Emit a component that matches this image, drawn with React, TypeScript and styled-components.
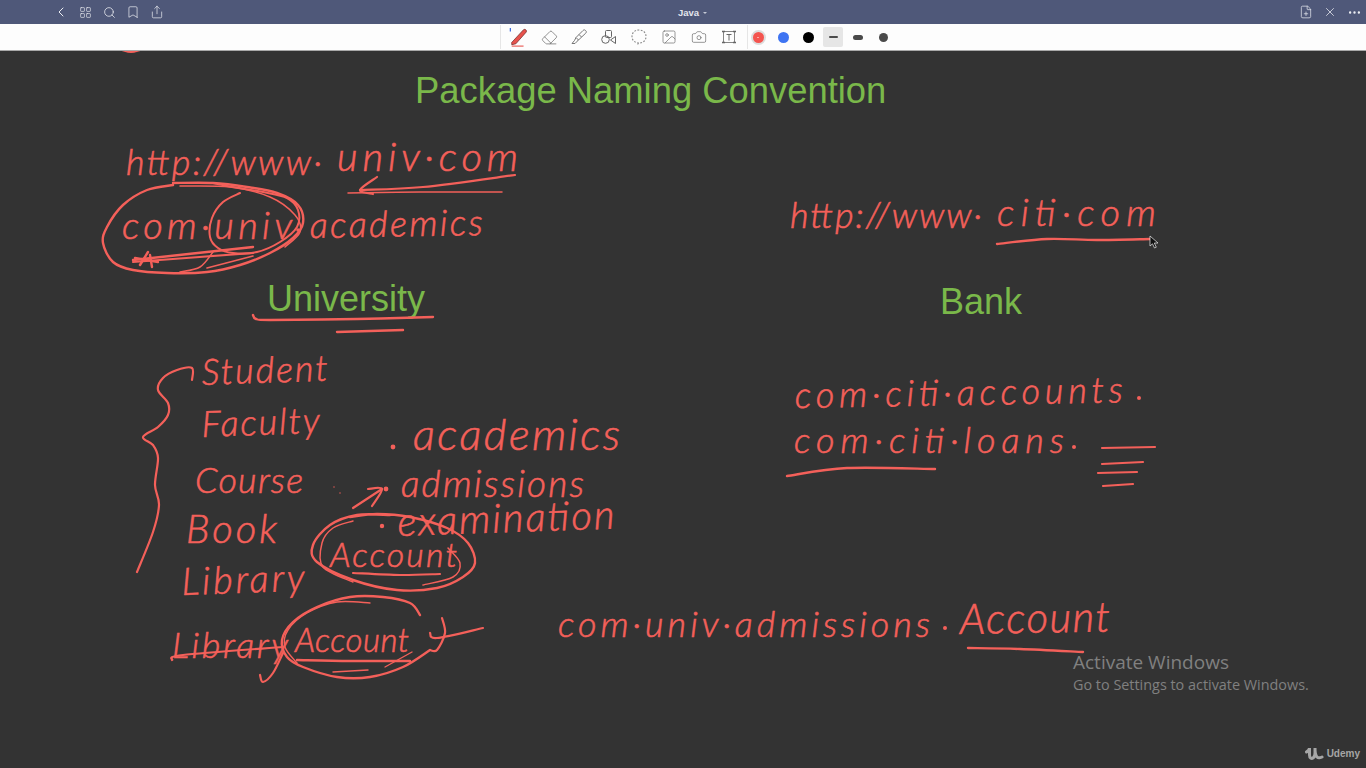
import React from 'react';
import styled, { createGlobalStyle } from 'styled-components';
import {
  Bookmark,
  Camera,
  ChevronLeft,
  Eraser,
  FilePlus,
  Image,
  LayoutGrid,
  MoreHorizontal,
  Search,
  Share,
  X,
} from 'lucide-react';

const INK = '#f4605a';
const CANVAS_TOP = 51;

const GlobalStyle = createGlobalStyle`
  html, body {
    margin: 0;
    padding: 0;
    height: 100%;
    overflow: hidden;
    background: #333333;
  }
`;

const Page = styled.div`
  display: flex;
  flex-direction: column;
  width: 1366px;
  height: 768px;
  font-family: 'Liberation Sans', Arial, sans-serif;
`;

// Top title bar
const TitleBar = styled.header`
  display: grid;
  grid-template-columns: 1fr auto 1fr;
  align-items: center;
  height: 24px;
  padding: 0 4px 0 53px;
  background: #4f5879;
  color: #eceef3;
`;

const IconRow = styled.div<{ $end?: boolean }>`
  display: flex;
  align-items: center;
  gap: 8px;
  justify-content: ${(p) => (p.$end ? 'flex-end' : 'flex-start')};
`;

const BarButton = styled.span`
  display: flex;
  align-items: center;
  justify-content: center;
  width: 16px;
  height: 16px;
`;

const DocTitle = styled.div`
  display: flex;
  align-items: center;
  gap: 4px;
  margin-right: 30px;
  font-size: 9.500px;
  font-weight: 700;
  color: #e4e6ee;
`;

const Caret = styled.span`
  margin-top: 1px;
  width: 0;
  height: 0;
  border-left: 2px solid transparent;
  border-right: 2px solid transparent;
  border-top: 2px solid #c5c9d6;
`;

// Drawing tools
const ToolBar = styled.nav`
  display: flex;
  align-items: center;
  height: 26px;
  padding-left: 500px;
  background: #fdfdfd;
  border-bottom: 1px solid #a9a9a9;
  color: #666666;
`;

const ToolGroup = styled.div`
  display: flex;
  align-items: center;
  gap: 10px;
  padding: 0 8px;
  border-left: 1px solid #e6e6e6;
  height: 24px;
`;

const Tool = styled.span`
  display: flex;
  align-items: center;
  justify-content: center;
  width: 20px;
  height: 20px;
`;

const SwatchGroup = styled.div`
  display: flex;
  align-items: center;
  gap: 5px;
  height: 24px;
  border-left: 1px solid #e6e6e6;
`;

const SwatchSlot = styled.span<{ $active?: boolean }>`
  display: flex;
  align-items: center;
  justify-content: center;
  width: 20px;
  height: 20px;
  border-radius: 2px;
  background: ${(p) => (p.$active ? '#e6e6e6' : 'transparent')};
`;

const Swatch = styled.span<{ $color: string; $ring?: boolean }>`
  display: flex;
  align-items: center;
  justify-content: center;
  width: 11px;
  height: 11px;
  border-radius: 50%;
  background: ${(p) => p.$color};
  box-shadow: ${(p) => (p.$ring ? '0 0 0 2px #dddddd' : 'none')};
`;

const SwatchMark = styled.span`
  width: 0;
  height: 0;
  border-left: 1.5px solid transparent;
  border-right: 1.5px solid transparent;
  border-top: 1.5px solid #ffffff;
`;

const Nib = styled.span<{ $w: number; $h: number }>`
  width: ${(p) => p.$w}px;
  height: ${(p) => p.$h}px;
  border-radius: ${(p) => p.$h}px;
  background: #4a4a4a;
`;

// Slide area
const Canvas = styled.main`
  position: relative;
  flex: 1;
  background: #333333;
  overflow: hidden;
`;

const Heading = styled.h2<{ $x: number; $y: number; $size?: number }>`
  position: absolute;
  left: ${(p) => p.$x}px;
  top: ${(p) => p.$y - CANVAS_TOP}px;
  margin: 0;
  font-size: ${(p) => p.$size ?? 36}px;
  line-height: 40px;
  font-weight: 400;
  white-space: nowrap;
  color: #7ab84a;
`;

const InkLayer = styled.svg`
  position: absolute;
  inset: 0;
  width: 1366px;
  height: 717px;
`;

const InkWord = styled.text<{ $size: number }>`
  font-family: Lato, 'Open Sans', sans-serif;
  font-style: italic;
  font-weight: 300;
  font-size: ${(p) => p.$size}px;
  fill: ${INK};
  stroke: ${INK};
  stroke-width: 0.6px;
`;

const InkLine = styled.path<{ $w?: number }>`
  fill: none;
  stroke: ${INK};
  stroke-width: ${(p) => p.$w ?? 2.2}px;
  stroke-linecap: round;
  stroke-linejoin: round;
`;

const InkDot = styled.circle`
  fill: ${INK};
`;

const Watermark = styled.aside`
  position: absolute;
  left: 1073px;
  top: ${650 - CANVAS_TOP}px;
  font-family: 'Open Sans', sans-serif;
  color: #808080;
`;

const WatermarkTitle = styled.div`
  font-size: 19px;
  line-height: 24px;
`;

const WatermarkText = styled.div`
  font-size: 14.400px;
  line-height: 22px;
`;

const Brand = styled.div`
  position: absolute;
  right: 6px;
  bottom: 7px;
  display: flex;
  align-items: center;
  gap: 3px;
  font-size: 10px;
  font-weight: 700;
  color: #a6a6a6;
`;

const Cursor = styled.svg`
  position: absolute;
  left: 1149px;
  top: ${235 - CANVAS_TOP}px;
`;

type Word = { t: string; x: number; y: number; w: number; s: number; r?: number };

// x, baseline y and width in page pixels
const words: Word[] = [
  { t: 'http://www·', x: 126, y: 175, w: 196, s: 36 },
  { t: 'univ·com', x: 337, y: 171, w: 181, s: 40 },
  { t: 'com·univ', x: 122, y: 239, w: 170, s: 38 },
  { t: 'academics', x: 310, y: 238, w: 173, s: 36, r: -1 },
  { t: 'Student', x: 202, y: 385, w: 126, s: 36, r: -2 },
  { t: 'Faculty', x: 202, y: 437, w: 118, s: 36, r: -2 },
  { t: 'Course', x: 195, y: 493, w: 108, s: 36 },
  { t: 'Book', x: 186, y: 543, w: 91, s: 40 },
  { t: 'Library', x: 182, y: 595, w: 123, s: 38, r: -2 },
  { t: 'Library', x: 172, y: 658, w: 116, s: 36 },
  { t: 'Account', x: 295, y: 652, w: 114, s: 33 },
  { t: 'Account', x: 330, y: 567, w: 127, s: 34 },
  { t: 'academics', x: 413, y: 450, w: 207, s: 44 },
  { t: 'admissions', x: 401, y: 497, w: 183, s: 37 },
  { t: 'examination', x: 398, y: 536, w: 217, s: 40, r: -2 },
  { t: 'http://www·', x: 790, y: 228, w: 192, s: 36 },
  { t: 'citi·com', x: 997, y: 226, w: 159, s: 38 },
  { t: 'com·citi·accounts', x: 795, y: 408, w: 328, s: 36, r: -1 },
  { t: 'com·citi·loans', x: 794, y: 453, w: 270, s: 36 },
  { t: 'com·univ·admissions', x: 558, y: 637, w: 372, s: 36 },
  { t: 'Account', x: 960, y: 634, w: 150, s: 42, r: -1 },
];

const dots: [number, number, number][] = [
  [298, 230, 1.8],
  [393, 447, 2.4],
  [386, 489, 2.4],
  [382, 526, 2.2],
  [334, 487, 0.7],
  [340, 493, 0.7],
  [1139, 398, 2],
  [1074, 447, 2],
  [945, 628, 2],
];

const strokes: { p: number[]; w?: number }[] = [
  // red edge cut off by the toolbar
  { p: [122, 50, 131, 52, 140, 50], w: 2 },
  // arrows under the url
  { p: [348, 193, 420, 192, 502, 192], w: 1.5 },
  { p: [360, 190, 423, 187, 515, 175] },
  { p: [377, 177, 360, 190, 373, 194] },
  // outer ring round com.univ
  { p: [173, 185, 147, 190, 123, 205, 107, 227, 103, 243, 113, 262, 133, 270, 167, 273, 207, 272, 240, 265, 270, 253, 293, 238, 303, 223, 298, 205, 277, 193, 247, 187, 213, 183, 173, 183], w: 2.4 },
  { p: [180, 186, 230, 187, 270, 197, 295, 215, 300, 232, 285, 247], w: 1.5 },
  { p: [240, 193, 223, 202, 212, 218, 210, 237, 218, 248, 233, 253, 257, 252, 280, 242, 297, 227, 298, 210, 287, 198, 263, 192, 233, 187, 213, 183], w: 2 },
  { p: [133, 260, 253, 247], w: 2.4 },
  { p: [133, 262, 253, 253] },
  { p: [213, 252, 200, 267, 180, 272], w: 1.6 },
  { p: [207, 268, 253, 256], w: 1.6 },
  { p: [148, 252, 140, 265], w: 2.4 },
  { p: [150, 255, 152, 267], w: 2.4 },
  { p: [135, 258, 158, 262], w: 2.4 },
  // University underlines
  { p: [253, 315, 256, 319, 270, 320, 357, 319, 433, 317], w: 2.4 },
  { p: [337, 332, 403, 330], w: 2.4 },
  // brace
  { p: [192, 380, 192, 368, 177, 370, 163, 378, 158, 390, 168, 403, 168, 415, 158, 427, 143, 437, 153, 445, 158, 458, 155, 485, 159, 505, 153, 532, 137, 572] },
  // admissions arrow
  { p: [353, 508, 382, 489] },
  { p: [368, 489, 382, 489, 372, 506] },
  // upper Account ring
  { p: [390, 515, 357, 515, 330, 525, 313, 545, 317, 562, 353, 580, 397, 590, 437, 588, 463, 577, 475, 563, 468, 543, 447, 528, 410, 517, 377, 514, 350, 517], w: 2.4 },
  { p: [353, 521, 333, 528, 322, 543, 323, 567, 353, 582], w: 1.5 },
  { p: [448, 548, 460, 563, 453, 577, 423, 585], w: 1.5 },
  { p: [353, 573, 400, 575, 440, 574] },
  // lower Account ring
  { p: [420, 615, 410, 603, 383, 597, 350, 597, 317, 607, 293, 622, 282, 640, 287, 657, 303, 667, 337, 677, 370, 677, 403, 667, 430, 650], w: 2.4 },
  { p: [370, 603, 337, 602, 307, 613, 288, 630, 285, 647, 297, 663], w: 1.4 },
  { p: [297, 660, 350, 661, 410, 661], w: 2.4 },
  { p: [385, 667, 412, 652], w: 1.4 },
  { p: [333, 672, 368, 670], w: 1.4 },
  { p: [260, 675, 263, 682, 273, 673, 283, 653], w: 2.2 },
  { p: [172, 660, 183, 655, 283, 647] },
  { p: [430, 633, 437, 638, 483, 628], w: 2.2 },
  { p: [442, 618, 445, 633, 437, 650, 430, 650], w: 2.2 },
  // bank notes
  { p: [997, 244, 1047, 239, 1097, 240, 1150, 239], w: 2.4 },
  { p: [787, 476, 847, 468, 935, 469], w: 2.4 },
  { p: [1102, 448, 1155, 447] },
  { p: [1102, 464, 1143, 462] },
  { p: [1098, 473, 1137, 472] },
  { p: [1103, 486, 1133, 484] },
  { p: [968, 648, 1020, 649, 1083, 652], w: 2.4 },
];

// smooth curve through a flat list of points
const smooth = (p: number[]) => {
  let d = `M${p[0]} ${p[1]}`;
  const n = p.length / 2;
  const at = (i: number, k: number) => p[Math.max(0, Math.min(n - 1, i)) * 2 + k];
  for (let i = 0; i < n - 1; i++) {
    const c1x = at(i, 0) + (at(i + 1, 0) - at(i - 1, 0)) / 6;
    const c1y = at(i, 1) + (at(i + 1, 1) - at(i - 1, 1)) / 6;
    const c2x = at(i + 1, 0) - (at(i + 2, 0) - at(i, 0)) / 6;
    const c2y = at(i + 1, 1) - (at(i + 2, 1) - at(i, 1)) / 6;
    d += ` C${c1x} ${c1y} ${c2x} ${c2y} ${at(i + 1, 0)} ${at(i + 1, 1)}`;
  }
  return d;
};

const PenIcon = () => (
  <svg width="22" height="22" viewBox="0 0 22 22" fill="none">
    <path d="M1.500 1v4" stroke="#3f6fe0" strokeWidth="1.400" />
    <path d="M3 17L16 3c1.500-1.200 4 .5 3 2.500L7.500 18.500 3 19.500z" fill="#e8524c" stroke="#6e2a28" strokeWidth="0.8" />
    <path d="M3 21h13" stroke="#e8524c" strokeWidth="1.200" />
  </svg>
);

const MarkerIcon = () => (
  <svg width="18" height="18" viewBox="0 0 18 18" fill="none" stroke="#777" strokeWidth="1">
    <path d="M6 9.500L13 2.500c.8-.8 1.700-.8 2.300-.2l.6.600c.6.6.6 1.500-.2 2.300L8.500 12z" />
    <path d="M6 9.500l-1.500 3-2.500 3h3l2.500-2.500 1-1.500M9 6.500l2.500 2.500" />
  </svg>
);

const ShapesIcon = () => (
  <svg width="18" height="18" viewBox="0 0 18 18" fill="none" stroke="#666" strokeWidth="1">
    <rect x="5.500" y="2.500" width="6" height="7" rx="1" />
    <circle cx="5.500" cy="11.500" r="3.800" />
    <path d="M15.500 8.500v7l-5-3.500z" />
  </svg>
);

const LassoIcon = () => (
  <svg width="18" height="18" viewBox="0 0 18 18" fill="none" stroke="#8a8a8a" strokeWidth="1.100" strokeDasharray="1.800 1.500">
    <path d="M9 15c-4 0-7-2.500-7-6.500S5 2 9 2s7 2.500 7 6.500-3 6.500-7 6.500c-1 0-1.500 1-.5 2" />
  </svg>
);

const TextBoxIcon = () => (
  <svg width="16" height="16" viewBox="0 0 16 16" fill="none" stroke="#666" strokeWidth="1">
    <path d="M2.500 2.500h11M2.500 13.500h11M2.500 2.500v11M13.500 2.500v11" strokeWidth="0.8" />
    <path d="M5.500 5.500h5M8 5.500v6" />
    <path d="M1 2.500h3M12 2.500h3M1 13.500h3M12 13.500h3" strokeWidth="1.400" />
  </svg>
);

const UdemyIcon = () => (
  <svg width="19" height="15" viewBox="0 0 19 15" fill="none" stroke="#a6a6a6" strokeWidth="3" strokeLinecap="round">
    <path d="M1.500 6c2-1.500 3-3 3-4v7c0 3 2 4 3.500 3s2-3 2-5V2c0 4 0 7 2 9 1 1 3 1 5 0" />
  </svg>
);

const App: React.FC = () => {
  const tools = [
    <PenIcon key="pen" />,
    <Eraser key="eraser" size={17} strokeWidth={1} />,
    <MarkerIcon key="marker" />,
    <ShapesIcon key="shapes" />,
    <LassoIcon key="lasso" />,
    <Image key="image" size={16} strokeWidth={1} />,
    <Camera key="camera" size={16} strokeWidth={1} />,
    <TextBoxIcon key="text" />,
  ];

  return (
    <Page>
      <GlobalStyle />
      <TitleBar>
        <IconRow>
          <BarButton><ChevronLeft size={16} strokeWidth={1.5} /></BarButton>
          <BarButton><LayoutGrid size={13} strokeWidth={1.2} /></BarButton>
          <BarButton><Search size={13} strokeWidth={1.4} /></BarButton>
          <BarButton><Bookmark size={14} strokeWidth={1.2} /></BarButton>
          <BarButton><Share size={14} strokeWidth={1.2} /></BarButton>
        </IconRow>
        <DocTitle>
          Java <Caret />
        </DocTitle>
        <IconRow $end>
          <BarButton><FilePlus size={14} strokeWidth={1.2} /></BarButton>
          <BarButton><X size={14} strokeWidth={1.3} /></BarButton>
          <BarButton><MoreHorizontal size={15} strokeWidth={1.8} /></BarButton>
        </IconRow>
      </TitleBar>

      <ToolBar>
        <ToolGroup>
          {tools.map((icon, i) => (
            <Tool key={i}>{icon}</Tool>
          ))}
        </ToolGroup>
        <SwatchGroup>
          <SwatchSlot>
            <Swatch $color="#f4544f" $ring>
              <SwatchMark />
            </Swatch>
          </SwatchSlot>
          <SwatchSlot><Swatch $color="#3e74f2" /></SwatchSlot>
          <SwatchSlot><Swatch $color="#000000" /></SwatchSlot>
          <SwatchSlot $active><Nib $w={9} $h={2} /></SwatchSlot>
          <SwatchSlot><Nib $w={10} $h={5} /></SwatchSlot>
          <SwatchSlot><Nib $w={9} $h={9} /></SwatchSlot>
        </SwatchGroup>
      </ToolBar>

      <Canvas>
        <Heading $x={415} $y={71} $size={36.4}>Package Naming Convention</Heading>
        <Heading $x={267} $y={279}>University</Heading>
        <Heading $x={940} $y={282}>Bank</Heading>

        <InkLayer viewBox={`0 ${CANVAS_TOP} 1366 717`}>
          {strokes.map((s, i) => (
            <InkLine key={i} d={smooth(s.p)} $w={s.w} />
          ))}
          {dots.map(([x, y, r], i) => (
            <InkDot key={i} cx={x} cy={y} r={r} />
          ))}
          {words.map((w, i) => (
            <InkWord
              key={i}
              x={w.x}
              y={w.y}
              $size={w.s}
              textLength={w.w}
              lengthAdjust="spacing"
              transform={w.r ? `rotate(${w.r} ${w.x} ${w.y})` : undefined}
            >
              {w.t}
            </InkWord>
          ))}
        </InkLayer>

        <Cursor width="10" height="14" viewBox="0 0 10 14">
          <path d="M1 1v10l2.500-2.200L5.500 13l1.800-.8-2-4.200H9z" fill="#111" stroke="#eee" strokeWidth="0.7" />
        </Cursor>

        <Watermark>
          <WatermarkTitle>Activate Windows</WatermarkTitle>
          <WatermarkText>Go to Settings to activate Windows.</WatermarkText>
        </Watermark>

        <Brand>
          <UdemyIcon />
          Udemy
        </Brand>
      </Canvas>
    </Page>
  );
};

export default App;
